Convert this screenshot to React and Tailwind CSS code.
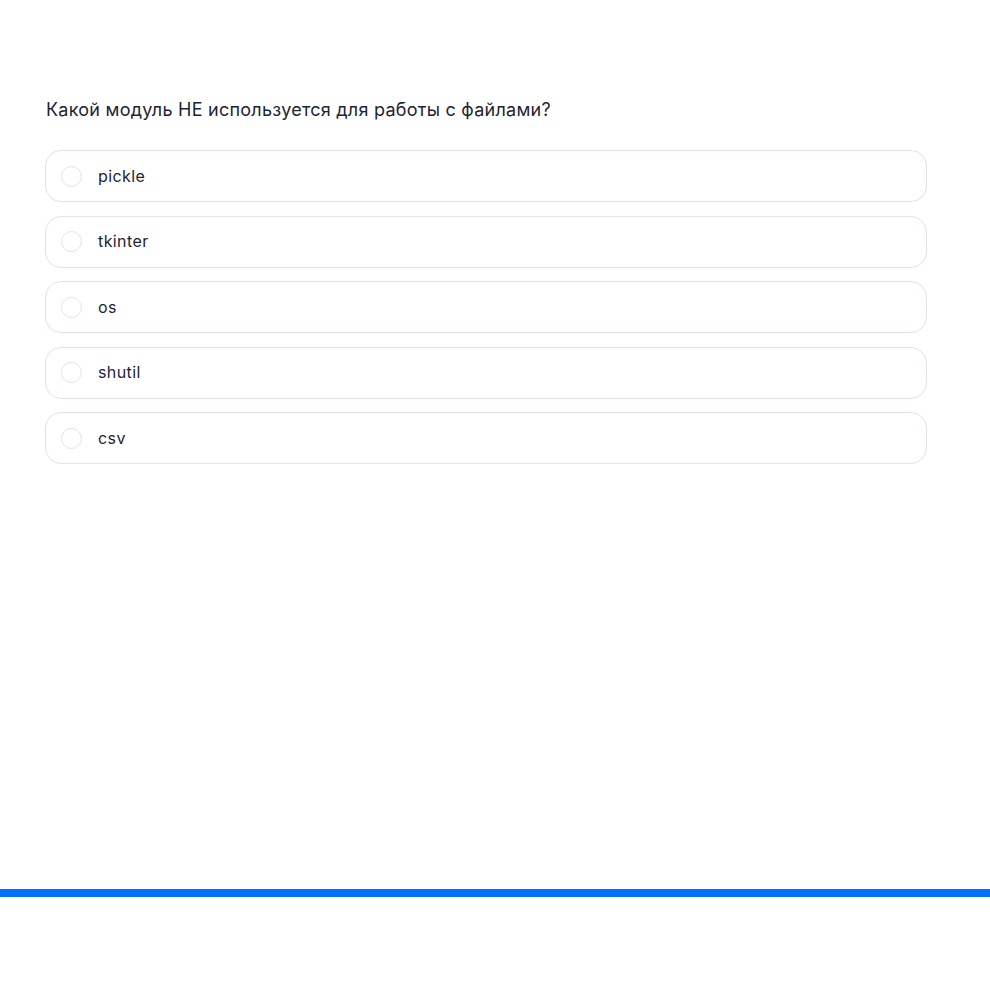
const options = ["pickle", "tkinter", "os", "shutil", "csv"];

const App = () => {
  return (
    <div
      className="w-[990px] h-[990px] bg-white flex flex-col text-[#1e2433]"
      style={{ fontFamily: "Inter, 'Noto Sans', sans-serif" }}
    >
      <div className="h-[889px] pt-[96px] pl-[45px] pr-[63px]">
        <h2 className="text-[18px] leading-[28px] pl-px font-normal tracking-[0.25px]">
          Какой модуль НЕ используется для работы с файлами?
        </h2>
        <div className="mt-[26px] flex flex-col gap-[13.5px]">
          {options.map((option) => (
            <label
              key={option}
              className="h-[52px] flex items-center border border-[#dde2ec] rounded-[16px] pl-[15px] cursor-pointer"
            >
              <span className="w-[21px] h-[21px] rounded-full border border-[#dde2ec] shrink-0" />
              <span className="ml-[16px] -mt-px text-[16px] leading-none tracking-[0.4px]">{option}</span>
            </label>
          ))}
        </div>
      </div>
      <div className="h-[8px] bg-[#006eff]" />
    </div>
  );
};

export default App;
